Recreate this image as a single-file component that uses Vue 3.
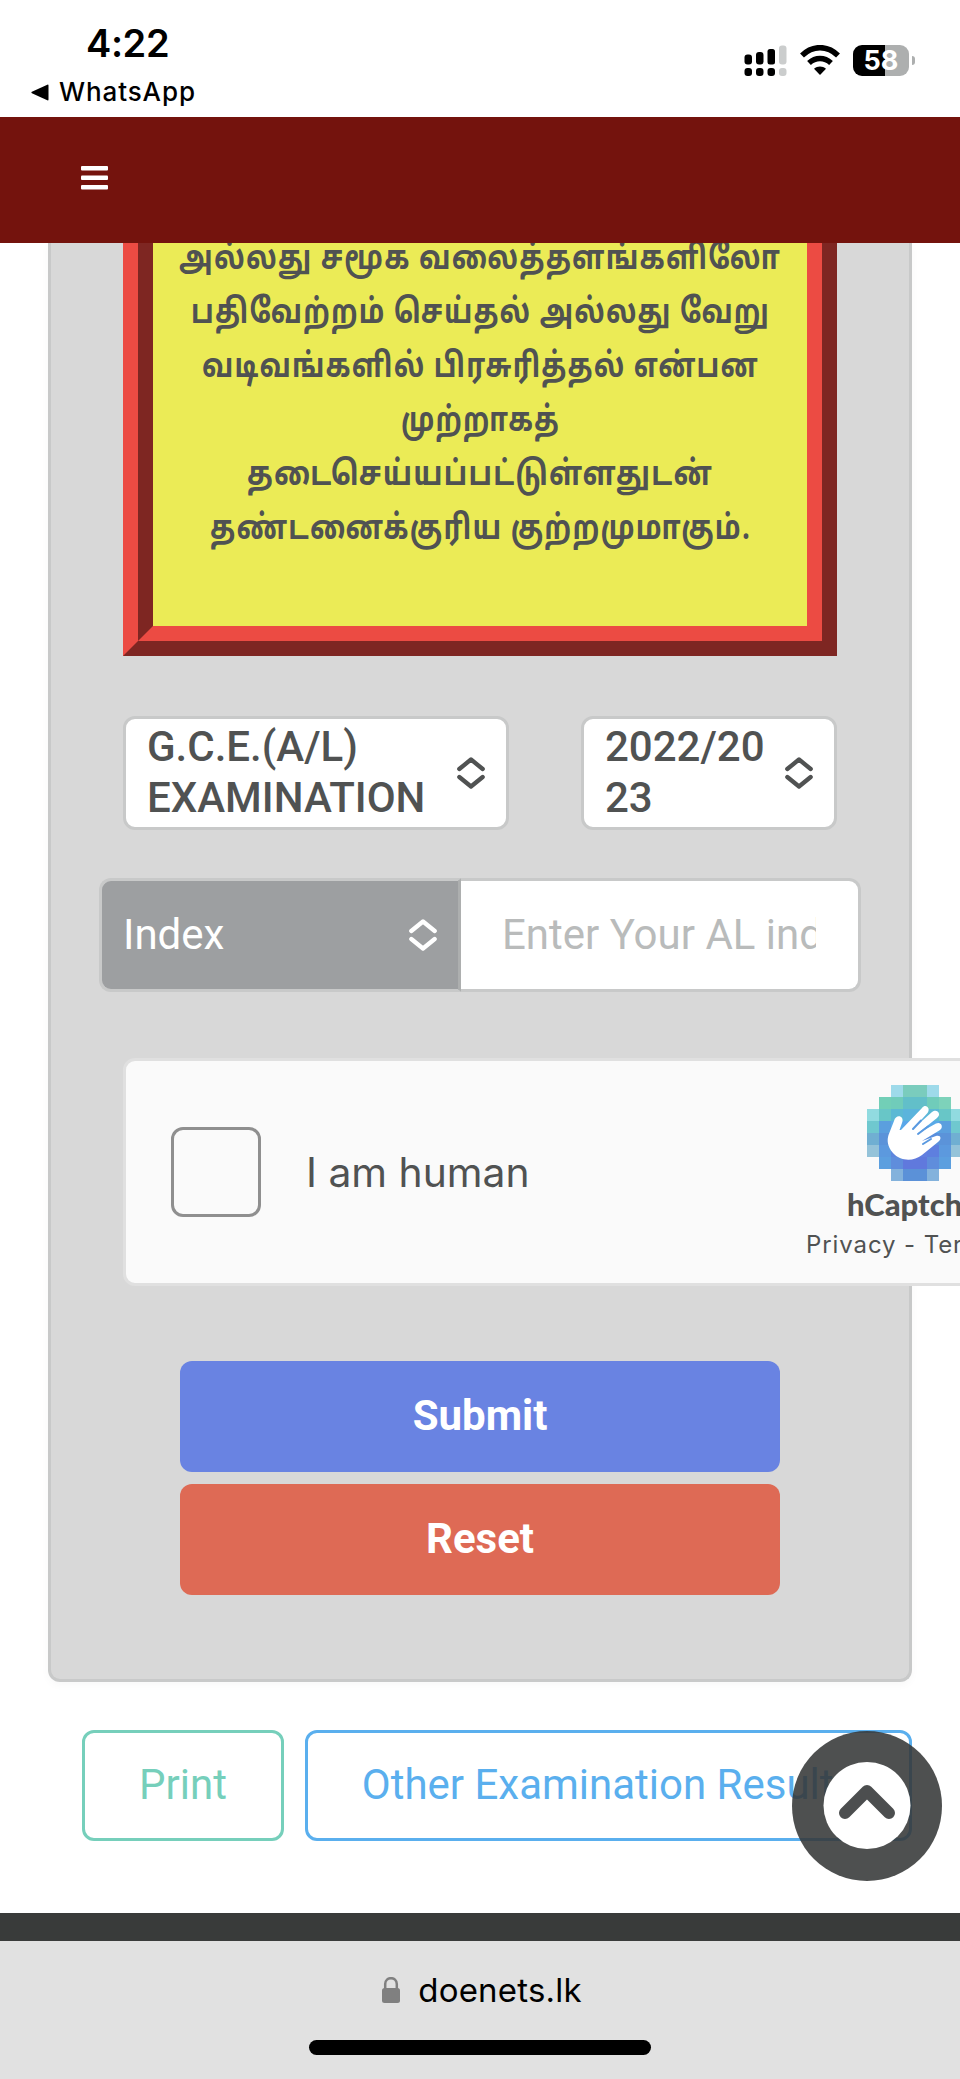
<script setup>
import { ref } from 'vue'

const notice = [
  { text: 'அல்லது சமூக வலைத்தளங்களிலோ', width: 602 },
  { text: 'பதிவேற்றம் செய்தல் அல்லது வேறு', width: 579 },
  { text: 'வடிவங்களில் பிரசுரித்தல் என்பன', width: 557 },
  { text: 'முற்றாகத்', width: 159 },
  { text: 'தடைசெய்யப்பட்டுள்ளதுடன்', width: 466 },
  { text: 'தண்டனைக்குரிய குற்றமுமாகும்.', width: 541 }
]

const indexNo = ref('')
const checked = ref(false)

// hCaptcha mosaic, one entry per 12px cell
const mosaic = [
  ['', '', '#9edaea', '#7accbd', '#7accbd', '#9edaea', '', ''],
  ['', '#72cfb7', '#70ccba', '#62bfc9', '#62bfc9', '#70ccba', '#7dd2ba', ''],
  ['#91dbe0', '#68c6c7', '#5bb9d4', '#5bb4dc', '#5bb4dc', '#5bb9d4', '#68c6c7', '#91dbe0'],
  ['#6fc8cf', '#5b9fde', '#5aaae8', '#5aa7ea', '#5aa7ea', '#5aaae8', '#5b9fde', '#6fc8cf'],
  ['#70afd2', '#5b93d9', '#598fdd', '#5989e0', '#5989e0', '#598fdd', '#5b93d9', '#70afd2'],
  ['#95c3d9', '#5c99de', '#5e85dd', '#627fe0', '#627fe0', '#5e7fdf', '#5c99de', '#95c3d9'],
  ['', '#5c9fdf', '#5f8ddc', '#6079dd', '#6079dd', '#5f8ddc', '#5c9fdf', ''],
  ['', '', '#83b2dc', '#5b91d8', '#5b91d8', '#83b2dc', '', '']
]

function onReset() {
  indexNo.value = ''
  checked.value = false
}
</script>

<template>
  <div class="screen">
    <header class="status">
      <div class="status-left">
        <div class="time">4:22</div>
        <div class="back">
          <svg class="back-arrow" viewBox="0 0 18 17"><path d="M17.5 1.4v14.2q0 1.2-1.2.7L.9 9.2q-1-.7 0-1.4L16.3.7q1.2-.5 1.2.7z" /></svg>
          <span>WhatsApp</span>
        </div>
      </div>
      <div class="status-icons">
        <svg class="signal" viewBox="0 0 43 31">
          <rect x="0.5" y="9.5" width="7.5" height="10" rx="3" />
          <rect x="12" y="7" width="7.5" height="12.5" rx="3" />
          <rect x="23.5" y="4" width="7.5" height="15.5" rx="2.5" />
          <rect class="dim" x="35" y="0.5" width="7.5" height="19" rx="3" />
          <rect x="0.5" y="23" width="7.5" height="8" rx="3" />
          <rect x="12" y="23" width="7.5" height="8" rx="3" />
          <rect x="23.5" y="23" width="7.5" height="8" rx="3" />
          <rect class="dim" x="35" y="23" width="7.5" height="8" rx="3" />
        </svg>
        <svg class="wifi" viewBox="0 0 40 30">
          <path class="arc" d="M2 10.5C12.5 0 27.5 0 38 10.5M9 18C15.5 12 24.5 12 31 18" />
          <path d="M20 30l-6-6.2c3.5-3.2 8.5-3.2 12 0z" />
        </svg>
        <div class="battery"><span>58</span></div>
        <i class="battery-nub"></i>
      </div>
    </header>

    <nav class="navbar">
      <button class="menu" aria-label="Menu">
        <svg viewBox="0 0 27 24">
          <rect width="27" height="4.5" rx="1" />
          <rect y="9.5" width="27" height="4.5" rx="1" />
          <rect y="19" width="27" height="4.5" rx="1" />
        </svg>
      </button>
    </nav>

    <main class="content">
      <section class="panel">
        <div class="notice">
          <div class="notice-inner">
            <svg v-for="(line, i) in notice" :key="i" class="notice-line" :width="line.width" height="54">
              <text x="0" y="36" :textLength="line.width" lengthAdjust="spacingAndGlyphs">{{ line.text }}</text>
            </svg>
          </div>
        </div>

        <div class="selects">
          <div class="select exam">
            <span>G.C.E.(A/L) EXAMINATION</span>
            <svg class="sort" viewBox="0 0 28 32"><path d="M2.3 12L14 2.5l11.7 9.5M2.3 20L14 29.5l11.7-9.5" /></svg>
          </div>
          <div class="select year">
            <span>2022/2023</span>
            <svg class="sort" viewBox="0 0 28 32"><path d="M2.3 12L14 2.5l11.7 9.5M2.3 20L14 29.5l11.7-9.5" /></svg>
          </div>
        </div>

        <div class="index-row">
          <div class="index-type">
            <span>Index</span>
            <svg class="sort" viewBox="0 0 28 32"><path d="M2.3 12L14 2.5l11.7 9.5M2.3 20L14 29.5l11.7-9.5" /></svg>
          </div>
          <div class="index-field">
            <input v-model="indexNo" placeholder="Enter Your AL index Number">
          </div>
        </div>

        <div class="captcha">
          <button class="captcha-box" :class="{ checked }" aria-label="I am human" @click="checked = !checked"></button>
          <span class="captcha-label">I am human</span>
          <div class="captcha-brand">
            <svg class="captcha-logo" viewBox="0 0 96 96">
              <g shape-rendering="crispEdges">
                <template v-for="(row, y) in mosaic" :key="y">
                  <template v-for="(color, x) in row" :key="x">
                    <rect v-if="color" :x="x * 12" :y="y * 12" width="12" height="12" :fill="color" />
                  </template>
                </template>
              </g>
              <path class="hand" d="M21.5 50L27 36C29 28 38 31 35 38L32.5 45H34L55 23C59 18 64 24 60.5 28L46 44L65 27C70 23 75 29 70 33L50 49L69 38.5C74 36 77 42 73 45L55 56L69 51C74 49.5 75 54 71 57L55 70C46 77 33 76 26 68C20 61 20 55 21.5 50Z" />
              <path class="fingers" d="M46 44l8-8.5M51 49l10-7.5M56 59l8-5" />
            </svg>
            <strong>hCaptcha</strong>
            <span>Privacy - Terms</span>
          </div>
        </div>

        <div class="actions">
          <button class="submit">Submit</button>
          <button class="reset" @click="onReset">Reset</button>
        </div>
      </section>

      <div class="links">
        <button class="print">Print</button>
        <button class="other">Other Examination Results</button>
      </div>
    </main>

    <div class="footer-strip"></div>

    <footer class="browser-bar">
      <div class="address">
        <svg class="lock" viewBox="0 0 18 26"><path class="shackle" d="M3.2 12V7C3.2-.8 14.8-.8 14.8 7v5" /><rect y="11" width="18" height="15" rx="2.5" /></svg>
        <span>doenets.lk</span>
      </div>
      <div class="home-bar"></div>
    </footer>

    <button class="to-top" aria-label="Back to top">
      <svg viewBox="0 0 150 150">
        <circle class="disc" cx="75" cy="74.5" r="43.5" />
        <path d="M53 82L75 60l22 22" />
      </svg>
    </button>
  </div>
</template>

<style>
body {
  background: #fff;
}
</style>

<style scoped>
.screen {
  position: relative;
  width: 960px;
  height: 2079px;
  overflow: hidden;
  display: flex;
  flex-direction: column;
  background: #fff;
  color: #505252;
  font-family: Roboto, "Liberation Sans", sans-serif;
  font-size: 42px;
}

.screen * {
  box-sizing: border-box;
}

button {
  font: inherit;
  padding: 0;
  border: 0;
  cursor: pointer;
}

svg {
  display: block;
  flex: none;
}

.status {
  height: 117px;
  flex: none;
  display: flex;
  justify-content: space-between;
  padding: 0 45px 0 31px;
  color: #000;
  font-family: Inter, sans-serif;
}

.time {
  margin: 23px 0 0 55px;
  font-size: 38px;
  font-weight: 600;
  line-height: 40px;
  letter-spacing: -0.4px;
}

.back {
  display: flex;
  align-items: center;
  gap: 10px;
  margin-top: 13px;
  font-size: 26px;
  font-weight: 500;
  line-height: 32px;
  letter-spacing: 0.9px;
}

.back-arrow {
  width: 18px;
  height: 17px;
}

.status-icons {
  display: flex;
  align-items: flex-start;
  padding-top: 45px;
}

.signal {
  width: 43px;
  height: 31px;
  margin-right: 13px;
}

.dim {
  fill: #cbcdcd;
}

.wifi {
  width: 40px;
  height: 30px;
  margin-right: 13px;
}

.arc {
  fill: none;
  stroke: #000;
  stroke-width: 5.5;
}

.battery {
  width: 56px;
  height: 31px;
  border-radius: 9px;
  background: linear-gradient(90deg, #000 32px, #adafaf 32px);
  color: #fff;
  font-size: 27px;
  font-weight: 700;
  line-height: 32px;
  text-align: center;
}

.battery-nub {
  width: 3px;
  height: 9px;
  margin: 11px 0 0 3px;
  border-radius: 0 3px 3px 0;
  background: #adafaf;
}

.navbar {
  position: relative;
  z-index: 1;
  height: 126px;
  flex: none;
  display: flex;
  align-items: center;
  padding: 0 81px;
  background: #74130d;
}

.menu {
  margin-top: -4px;
  background: none;
}

.menu svg {
  width: 27px;
  height: 24px;
  fill: #fff;
}

.content {
  height: 1670px;
  flex: none;
  padding: 0 48px;
}

.panel {
  height: 1439px;
  padding: 0 72px;
  border: 3px solid #c8c9c9;
  border-top: 0;
  border-radius: 0 0 12px 12px;
  background: #d8d8d8;
  box-shadow: 0 3px 8px rgba(0, 0, 0, 0.03);
}

.notice {
  height: 413px;
  border: 15px solid #7e2622;
  border-left-color: #ec4b43;
  border-top: 0;
}

.notice-inner {
  height: 398px;
  display: flex;
  flex-direction: column;
  justify-content: flex-end;
  align-items: center;
  padding-bottom: 69px;
  border: 15px solid #ec4b43;
  border-left-color: #7e2622;
  border-top: 0;
  background: #ebeb56;
}

.notice-line {
  overflow: visible;
  fill: #505252;
  font-family: "Noto Sans Tamil", "Noto Sans", sans-serif;
  font-size: 34px;
  font-weight: 700;
  letter-spacing: 1.5px;
}

.selects {
  display: flex;
  justify-content: space-between;
  margin-top: 60px;
}

.select {
  height: 114px;
  display: flex;
  align-items: center;
  justify-content: space-between;
  border: 3px solid #c8c9c9;
  border-radius: 12px;
  background: #fff;
  font-weight: 500;
  line-height: 51px;
}

.select span {
  padding-bottom: 3px;
}

.exam {
  width: 386px;
  padding: 0 21px;
}

.exam span {
  width: 280px;
}

.year {
  width: 256px;
  padding: 0 21px;
}

.year span {
  width: 164px;
  word-break: break-all;
}

.sort {
  width: 28px;
  height: 32px;
  fill: none;
  stroke: #505252;
  stroke-width: 4.3;
  stroke-linecap: round;
  stroke-linejoin: round;
}

.index-row {
  display: flex;
  height: 114px;
  margin: 48px -24px 0;
}

.index-type {
  width: 362px;
  display: flex;
  align-items: center;
  justify-content: space-between;
  padding: 0 21px;
  border: 3px solid #c8c9c9;
  border-right-color: #adafaf;
  border-radius: 12px 0 0 12px;
  background: #9d9fa1;
  color: #fff;
}

.index-type span {
  padding-bottom: 2px;
}

.index-type .sort {
  stroke: #fff;
}

.index-field {
  flex: 1;
  display: flex;
  padding: 0 42px 0 41px;
  border: 3px solid #c8c9c9;
  border-left: 0;
  border-radius: 0 12px 12px 0;
  background: #fff;
}

.index-field input {
  width: 100%;
  padding: 0 0 2px;
  border: 0;
  outline: 0;
  background: none;
  font: inherit;
}

.index-field input::placeholder {
  color: #b9bbbb;
}

.captcha {
  width: 909px;
  height: 228px;
  display: flex;
  align-items: center;
  margin-top: 66px;
  padding-left: 45px;
  border: 3px solid #e0e0e0;
  border-radius: 12px;
  background: #fafafa;
  font-family: Inter, sans-serif;
}

.captcha-box {
  width: 90px;
  height: 90px;
  flex: none;
  border: 3px solid #8f8f8f;
  border-radius: 12px;
  background: #fafafa;
}

.captcha-box.checked {
  background: #7accbd;
}

.captcha-label {
  width: 546px;
  flex: none;
  padding-left: 45px;
  font-size: 40.8px;
  white-space: nowrap;
}

.captcha-brand {
  display: flex;
  flex-direction: column;
  align-items: flex-start;
  width: 200px;
  height: 100%;
  padding-top: 24px;
  white-space: nowrap;
}

.captcha-logo {
  width: 96px;
  height: 96px;
  margin-left: 60px;
}

.hand {
  fill: #fff;
}

.fingers {
  fill: none;
  stroke: #5999e0;
  stroke-width: 2;
  stroke-linecap: round;
}

.captcha-brand strong {
  margin: 4px 0 0 40px;
  font-family: Lato, sans-serif;
  font-size: 31px;
  font-weight: 900;
  line-height: 38px;
}

.captcha-brand span {
  margin: 7px 0 0 -1px;
  font-size: 24px;
  line-height: 30px;
  letter-spacing: 0.9px;
}

.actions {
  display: grid;
  gap: 12px;
  padding: 0 57px;
  margin-top: 75px;
}

.actions button {
  height: 111px;
  padding-bottom: 2px;
  border-radius: 12px;
  color: #fff;
  font-weight: 700;
}

.submit {
  background: #6983e2;
}

.reset {
  background: #de6a55;
}

.links {
  display: flex;
  gap: 21px;
  padding-left: 34px;
  margin-top: 48px;
}

.links button {
  height: 111px;
  padding-bottom: 2px;
  border: 3px solid;
  border-radius: 12px;
  background: #fff;
}

.print {
  width: 202px;
  color: #76cfbb;
}

.other {
  flex: 1;
  color: #5aafee;
  white-space: nowrap;
}

.footer-strip {
  height: 28px;
  flex: none;
  background: #393b3a;
}

.browser-bar {
  flex: 1;
  display: flex;
  flex-direction: column;
  align-items: center;
  background: #e1e1e1;
  color: #000;
  font-family: Inter, sans-serif;
}

.address {
  display: flex;
  align-items: center;
  gap: 18px;
  margin-top: 28px;
  padding-left: 4px;
  font-size: 33px;
  line-height: 42px;
  letter-spacing: 0.2px;
}

.lock {
  width: 18px;
  height: 26px;
  fill: #808080;
}

.shackle {
  fill: none;
  stroke: #808080;
  stroke-width: 2.5;
}

.home-bar {
  width: 342px;
  height: 15px;
  margin-top: 29px;
  border-radius: 8px;
  background: #000;
}

.to-top {
  position: absolute;
  right: 18px;
  bottom: 198px;
  width: 150px;
  height: 150px;
  border-radius: 50%;
  background: rgba(54, 56, 56, 0.88);
}

.to-top svg {
  width: 150px;
  height: 150px;
}

.disc {
  fill: #fff;
}

.to-top path {
  fill: none;
  stroke: #4c4e4f;
  stroke-width: 12;
  stroke-linecap: round;
  stroke-linejoin: round;
}
</style>
